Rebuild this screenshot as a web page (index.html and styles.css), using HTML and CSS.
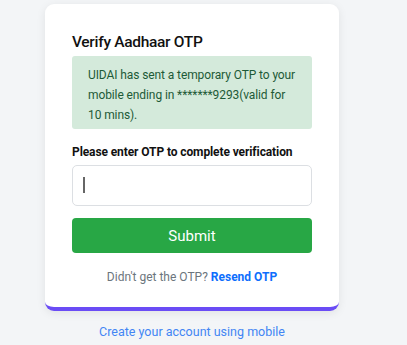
FILE: index.html
```html
<!DOCTYPE html>
<html lang="en">
  <head>
    <meta charset="UTF-8" />
    <meta name="viewport" content="width=device-width, initial-scale=1.0" />
    <title>Verify Aadhaar OTP</title>
    <link rel="stylesheet" href="styles.css">
  </head>
  <body>
    <div class="wrap">
      <div class="card">
        <h2 class="title">Verify Aadhaar OTP</h2>
        <div class="alert">
          UIDAI has sent a temporary OTP to your mobile ending in *******9293(valid for<br>10 mins).
        </div>
        <label class="label" for="otp">Please enter OTP to complete verification</label>
        <div class="field">
          <input id="otp" class="otp-input" type="text" />
          <span class="caret"></span>
        </div>
        <button class="submit">Submit</button>
        <p class="resend">Didn't get the OTP? <a href="#">Resend OTP</a></p>
      </div>
      <a class="mobile-link" href="#">Create your account using mobile</a>
    </div>
  </body>
</html>
```

FILE: styles.css
```css
body {
  margin: 0;
  background-color: #f3f5f7;
  font-family: Roboto, "Open Sans", sans-serif;
  color: #212529;
}
.wrap {
  width: 294px;
  margin-left: 45px;
  padding-top: 4px;
  display: flex;
  flex-direction: column;
  align-items: center;
}
.card {
  box-sizing: border-box;
  width: 294px;
  background-color: #ffffff;
  border-radius: 9px;
  border-bottom: 4px solid #6a4cf5;
  padding: 28px 27px 21px 27px;
  box-shadow: 0 2px 10px rgba(0, 0, 0, 0.08);
}
.title {
  margin: 0 0 4px 0;
  font-size: 15.5px;
  font-weight: 500;
  letter-spacing: -0.3px;
  line-height: 20px;
  color: #111111;
}
.alert {
  background-color: #d4eadb;
  color: #1d5a37;
  border-radius: 3px;
  padding: 9px 10px 4px 16px;
  font-size: 12px;
  letter-spacing: -0.1px;
  line-height: 20px;
  margin-bottom: 14px;
}
.label {
  display: block;
  font-size: 12px;
  font-weight: 700;
  letter-spacing: -0.1px;
  line-height: 18px;
  margin-bottom: 4px;
  color: #111111;
}
.field {
  position: relative;
  margin-bottom: 12px;
}
.otp-input {
  box-sizing: border-box;
  display: block;
  width: 100%;
  height: 41px;
  border: 1px solid #dcdfe3;
  border-radius: 5px;
  outline: none;
  padding: 0 12px;
  font-size: 14px;
}
.caret {
  position: absolute;
  left: 11px;
  top: 12px;
  width: 2px;
  height: 16px;
  background-color: #666666;
}
.submit {
  display: block;
  width: 100%;
  height: 35px;
  border: none;
  border-radius: 4px;
  background-color: #28a745;
  color: #ffffff;
  font-family: inherit;
  font-size: 15px;
  cursor: pointer;
}
.resend {
  margin: 15px 0 0 0;
  text-align: center;
  font-size: 12px;
  line-height: 18px;
  color: #6c757d;
}
.resend a {
  color: #0d6efd;
  font-weight: 700;
  text-decoration: none;
}
.mobile-link {
  margin-top: 13px;
  font-size: 12.5px;
  color: #4285f4;
  text-decoration: none;
}
```
